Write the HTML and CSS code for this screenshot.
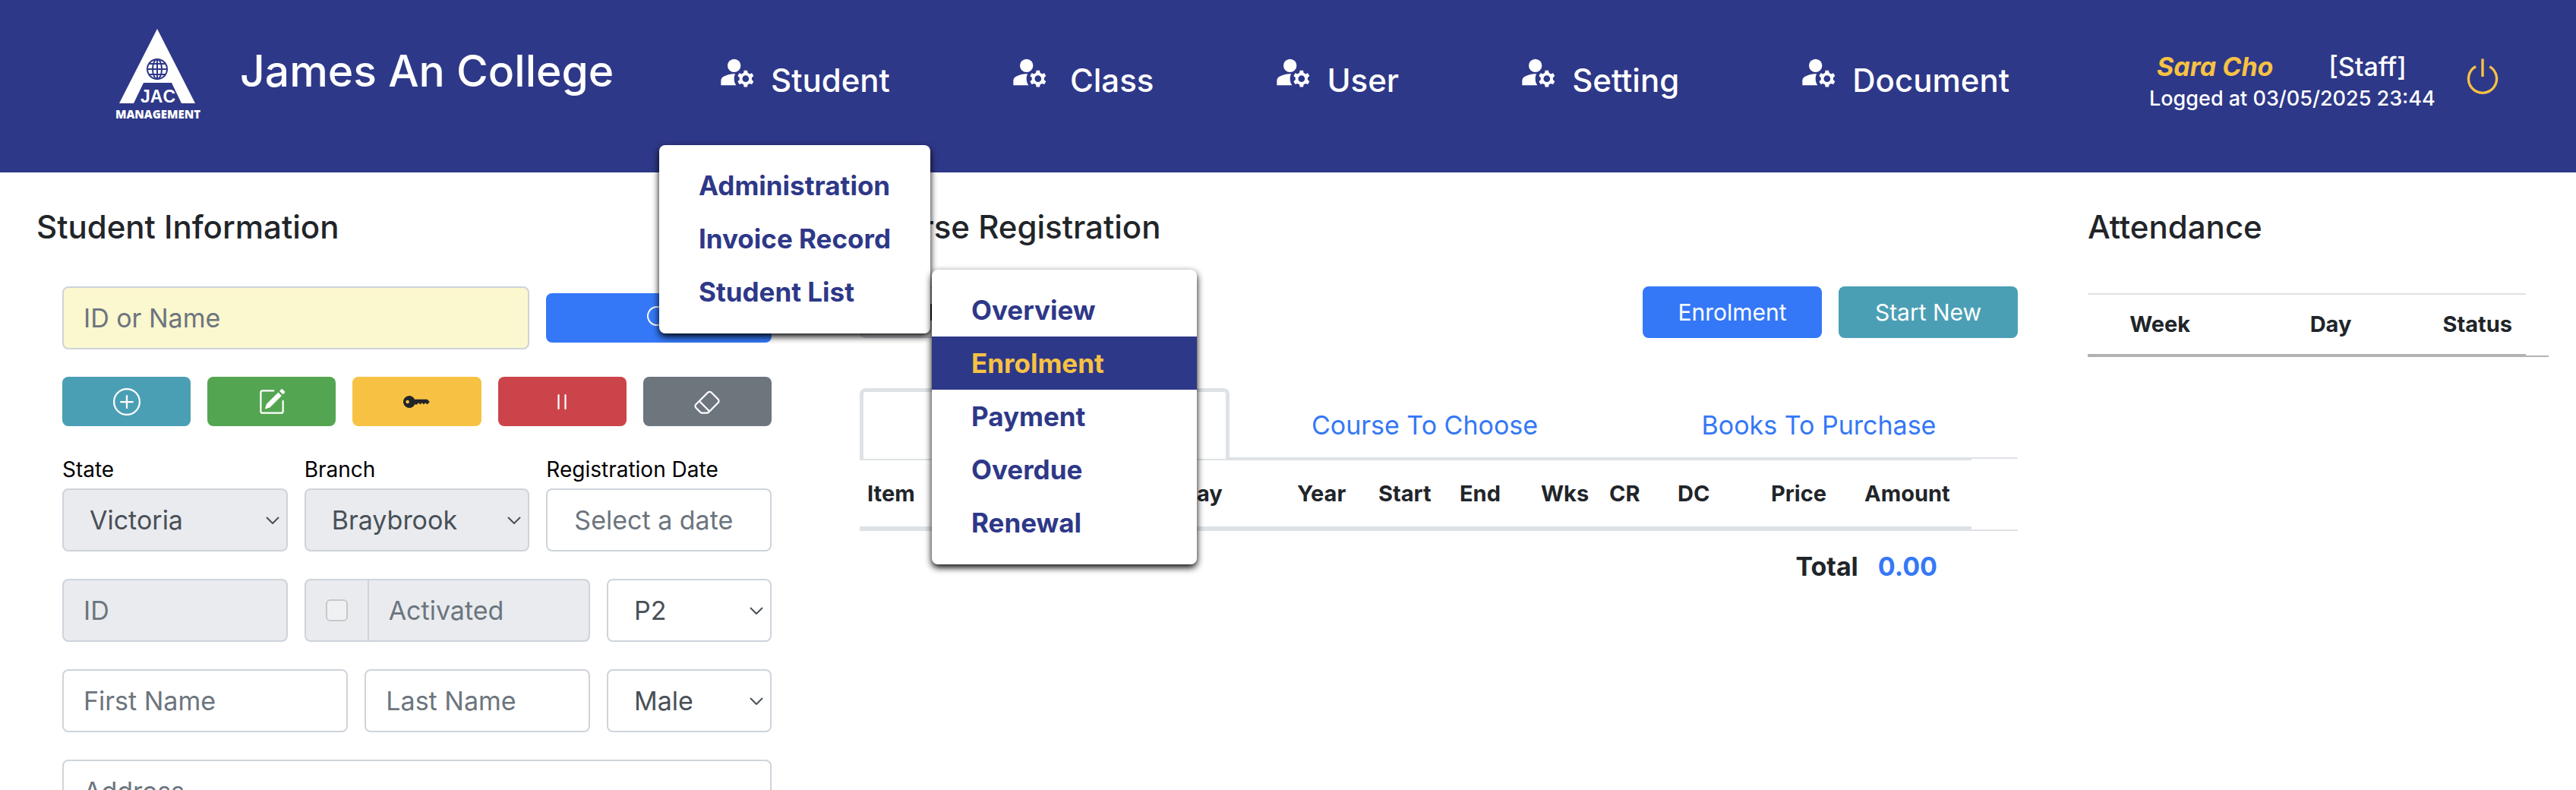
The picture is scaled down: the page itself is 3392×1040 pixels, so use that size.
FILE: index.html
```html
<!DOCTYPE html>
<html lang="en">
<head>
<meta charset="utf-8">
<title>James An College</title>
<link rel="stylesheet" href="styles.css">
</head>
<body>
<svg class="sprite" aria-hidden="true">
  <symbol id="user-gear" viewBox="0 0 24 24">
    <circle cx="10" cy="8" r="4"/>
    <path d="M10.67 13.02c-.22-.01-.44-.02-.67-.02-2.42 0-4.68.67-6.61 1.82-.88.52-1.39 1.5-1.39 2.53V20h9.26c-.79-1.13-1.26-2.51-1.26-4 0-1.07.25-2.07.67-2.98z"/>
    <path d="M20.75 16c0-.22-.03-.42-.06-.63l1.14-1.01-1-1.73-1.45.49c-.32-.27-.68-.48-1.08-.63L18 11h-2l-.3 1.49c-.4.15-.76.36-1.08.63l-1.45-.49-1 1.73 1.14 1.01c-.03.21-.06.41-.06.63s.03.42.06.63l-1.14 1.01 1 1.73 1.45-.49c.32.27.68.48 1.08.63L16 21h2l.3-1.49c.4-.15.76-.36 1.08-.63l1.45.49 1-1.73-1.14-1.01c.03-.21.06-.41.06-.63zM17 18c-1.1 0-2-.9-2-2s.9-2 2-2 2 .9 2 2-.9 2-2 2z"/>
  </symbol>
</svg>

<header class="header">
  <div class="brand">
    <svg class="logo" viewBox="0 0 128 128" role="img" aria-label="JAC Management">
      <path fill="#fff" d="M63 2 113 100H95L82 73H45L32 100H13z"/>
      <g fill="none" stroke="#2e3888" stroke-width="2">
        <circle cx="63" cy="55" r="13"/>
        <ellipse cx="63" cy="55" rx="6" ry="13"/>
        <path d="M63 42v26M50 55h26M52 48h22M52 62h22"/>
      </g>
      <text class="logo-jac" x="64" y="99">JAC</text>
      <text class="logo-sub" x="64" y="120">MANAGEMENT</text>
    </svg>
    <h1 class="brand-name">James An College</h1>
  </div>

  <nav class="nav">
    <div class="nav-item">
      <a class="nav-link" href="#student"><svg class="nav-icon"><use href="#user-gear"/></svg><span>Student</span></a>
      <ul class="menu">
        <li><a href="#administration">Administration</a></li>
        <li><a href="#invoice">Invoice Record</a></li>
        <li><a href="#list">Student List</a></li>
      </ul>
      <ul class="menu submenu">
        <li><a href="#overview">Overview</a></li>
        <li><a class="active" href="#enrolment">Enrolment</a></li>
        <li><a href="#payment">Payment</a></li>
        <li><a href="#overdue">Overdue</a></li>
        <li><a href="#renewal">Renewal</a></li>
      </ul>
    </div>
    <div class="nav-item"><a class="nav-link wide" href="#class"><svg class="nav-icon"><use href="#user-gear"/></svg><span>Class</span></a></div>
    <div class="nav-item"><a class="nav-link" href="#user"><svg class="nav-icon"><use href="#user-gear"/></svg><span>User</span></a></div>
    <div class="nav-item"><a class="nav-link" href="#setting"><svg class="nav-icon"><use href="#user-gear"/></svg><span>Setting</span></a></div>
    <div class="nav-item"><a class="nav-link" href="#document"><svg class="nav-icon"><use href="#user-gear"/></svg><span>Document</span></a></div>
  </nav>

  <div class="account">
    <div class="account-info">
      <div class="account-row"><em class="account-name">Sara Cho</em><span class="account-role">[Staff]</span></div>
      <div class="account-time">Logged at 03/05/2025 23:44</div>
    </div>
    <button class="power" type="button" aria-label="Log out">
      <svg viewBox="0 0 16 16"><path d="M7.5 1v7h1V1z"/><path d="M3 8.812a4.999 4.999 0 0 1 2.578-4.375l-.485-.874A6 6 0 1 0 11 3.616l-.501.865A5 5 0 1 1 3 8.812z"/></svg>
    </button>
  </div>
</header>

<main class="main">
  <section class="student">
    <h2>Student Information</h2>
    <form class="form">
      <div class="row search-row">
        <input class="control span-8 search" type="text" placeholder="ID or Name" aria-label="ID or Name">
        <button class="btn blue span-4" type="button" aria-label="Search">
          <svg class="icon-sm" viewBox="0 0 16 16"><path d="M11.742 10.344a6.5 6.5 0 1 0-1.397 1.398h-.001q.044.06.098.115l3.85 3.85a1 1 0 0 0 1.415-1.414l-3.85-3.85a1 1 0 0 0-.115-.1zM12 6.5a5.5 5.5 0 1 1-11 0 5.5 5.5 0 0 1 11 0"/></svg>
        </button>
      </div>
      <div class="actions">
        <button class="btn teal" type="button" aria-label="Add"><svg class="icon" viewBox="0 0 16 16"><circle cx="8" cy="8" r="7.5" fill="none" stroke="currentColor"/><path d="M8 4.5v7M4.500 8h7" fill="none" stroke="currentColor" stroke-linecap="round"/></svg></button>
        <button class="btn green" type="button" aria-label="Edit"><svg class="icon" viewBox="0 0 16 16"><path d="M15.502 1.94a.5.5 0 0 1 0 .706L14.459 3.69l-2-2L13.502.646a.5.5 0 0 1 .707 0l1.293 1.293zm-1.75 2.456-2-2L4.939 9.21a.5.5 0 0 0-.121.196l-.805 2.414a.25.25 0 0 0 .316.316l2.414-.805a.5.5 0 0 0 .196-.12l6.813-6.814z"/><path d="M1 13.5A1.5 1.5 0 0 0 2.5 15h11a1.5 1.5 0 0 0 1.5-1.5v-6a.5.5 0 0 0-1 0v6a.5.5 0 0 1-.5.5h-11a.5.5 0 0 1-.5-.5v-11a.5.5 0 0 1 .5-.5H9a.5.5 0 0 0 0-1H2.5A1.5 1.5 0 0 0 1 2.5z"/></svg></button>
        <button class="btn yellow" type="button" aria-label="Password"><svg class="icon" viewBox="0 0 16 16"><path d="M3.5 11.5a3.5 3.5 0 1 1 3.163-5H14L15.500 8 14 9.500l-1-1-1 1-1-1-1 1-1-1-1 1H6.663a3.500 3.500 0 0 1-3.163 2zM2.500 9a1 1 0 1 0 0-2 1 1 0 0 0 0 2z"/></svg></button>
        <button class="btn red" type="button" aria-label="Suspend"><svg class="icon" viewBox="0 0 16 16"><path d="M6 4v8M10 4v8" fill="none" stroke="currentColor" stroke-linecap="round"/></svg></button>
        <button class="btn grey" type="button" aria-label="Clear"><svg class="icon" viewBox="0 0 16 16"><path d="M8.086 2.207a2 2 0 0 1 2.828 0l3.879 3.879a2 2 0 0 1 0 2.828l-5.500 5.500A2 2 0 0 1 7.879 15H5.120a2 2 0 0 1-1.414-.586l-2.500-2.500a2 2 0 0 1 0-2.828l6.879-6.879zm2.121.707a1 1 0 0 0-1.414 0L4.160 7.547l5.293 5.293 4.633-4.633a1 1 0 0 0 0-1.414l-3.879-3.879zM8.746 13.547 3.453 8.254 1.914 9.793a1 1 0 0 0 0 1.414l2.500 2.500a1 1 0 0 0 .707.293H7.880a1 1 0 0 0 .707-.293l.160-.160z"/></svg></button>
      </div>
      <div class="row labelled">
        <div class="field span-4"><label for="state">State</label><select class="control" id="state" disabled><option>Victoria</option></select></div>
        <div class="field span-4"><label for="branch">Branch</label><select class="control" id="branch" disabled><option>Braybrook</option></select></div>
        <div class="field span-4"><label for="date">Registration Date</label><input class="control date" id="date" type="text" placeholder="Select a date"></div>
      </div>
      <div class="row">
        <input class="control span-4" type="text" placeholder="ID" aria-label="ID" disabled>
        <div class="group span-5">
          <span class="group-box"><input type="checkbox" id="active" disabled></span>
          <label class="group-text" for="active">Activated</label>
        </div>
        <select class="control span-3" aria-label="Grade"><option>P2</option></select>
      </div>
      <div class="row">
        <input class="control span-5" type="text" placeholder="First Name" aria-label="First Name">
        <input class="control span-4" type="text" placeholder="Last Name" aria-label="Last Name">
        <select class="control span-3" aria-label="Gender"><option>Male</option></select>
      </div>
      <div class="row">
        <input class="control span-12" type="text" placeholder="Address" aria-label="Address">
      </div>
    </form>
  </section>

  <section class="course">
    <h2>Course Registration</h2>
    <div class="toolbar">
      <select class="grade" aria-label="Grade"><option>P2</option></select>
      <div class="toolbar-buttons">
        <button class="btn blue" type="button">Enrolment</button>
        <button class="btn teal" type="button">Start New</button>
      </div>
    </div>
    <div class="tabs">
      <a class="tab selected" href="#registered" aria-label="Registered"></a>
      <a class="tab" href="#courses">Course To Choose</a>
      <a class="tab" href="#books">Books To Purchase</a>
    </div>
    <div class="course-list">
      <table>
        <thead><tr><th class="c-item">Item</th><th class="c-name"></th><th class="c-day">Day</th><th class="c-date">Year</th><th class="c-date">Start</th><th class="c-date">End</th><th class="c-num">Wks</th><th class="c-num">CR</th><th class="c-sum">DC</th><th class="c-sum">Price</th><th>Amount</th></tr></thead>
      </table>
    </div>
    <div class="total"><span>Total</span><span class="total-value">0.00</span></div>
  </section>

  <section class="attendance">
    <h2>Attendance</h2>
    <div class="attendance-list">
      <table>
        <thead><tr><th class="a-week">Week</th><th class="a-day">Day</th><th>Status</th></tr></thead>
      </table>
    </div>
  </section>
</main>
</body>
</html>
```
FILE: styles.css
```css
* { box-sizing: border-box; }

body {
  margin: 0;
  height: 100vh;
  overflow: hidden;
  background: #fff;
  color: #212529;
  font-family: Inter, "Liberation Sans", sans-serif;
  font-size: 34px;
}

a { text-decoration: none; }
button, input, select { font: inherit; margin: 0; }
.sprite { display: none; }
svg { fill: currentColor; flex: none; display: block; }

/* Header */
.header {
  display: grid;
  grid-template-columns: 945fr 1701fr 746fr;
  height: 227px;
  background: #2e3888;
  color: #fff;
}
.brand { display: flex; align-items: flex-start; padding: 36px 0 0 144px; }
.logo { width: 128px; height: 128px; }
.logo-jac { font: bold 23px "Liberation Sans", sans-serif; fill: #fff; text-anchor: middle; }
.logo-sub { font: 800 15px "Open Sans", sans-serif; fill: #fff; text-anchor: middle; }
.brand-name {
  margin: 22px 0 0 44px;
  font-size: 57px;
  line-height: 72px;
  font-weight: 500;
  white-space: nowrap;
}
.nav { display: flex; justify-content: space-between; align-items: flex-start; padding-top: 69px; }
.nav-item { position: relative; }
.nav-link { display: flex; gap: 18px; color: #fff; font-size: 42px; line-height: 54px; font-weight: 500; }
.nav-link.wide { gap: 27px; }
.nav-link span { padding-top: 10px; }
.nav-icon { width: 52px; height: 52px; }

.menu {
  position: absolute;
  z-index: 1;
  top: 122px;
  left: -77px;
  width: 357px;
  margin: 0;
  padding: 18px 0 20px;
  list-style: none;
  background: #fff;
  border-radius: 8px;
  box-shadow: 0 4px 10px #000;
}
.menu a {
  display: block;
  padding-left: 52px;
  color: #2e3888;
  font-size: 35px;
  line-height: 70px;
  font-weight: 700;
}
.menu a.active { background: #2e3888; color: #f7c244; }
.submenu { top: 286px; left: 282px; width: 349px; }

.account { display: flex; align-items: flex-start; padding: 66px 0 0 184px; white-space: nowrap; }
.account-row { display: flex; justify-content: space-between; padding: 0 38px 0 10px; font-size: 34px; line-height: 44px; font-weight: 500; }
.account-name { color: #f7c244; font-weight: 700; }
.account-time { margin-top: 3px; font-size: 27px; line-height: 34px; font-weight: 500; }
.power { margin: 8px 0 0 35px; padding: 0; border: 0; background: none; color: #f7c244; }
.power svg { width: 54px; height: 54px; }

/* Page columns */
.main {
  display: grid;
  grid-template-columns: 992fr 1525fr 607fr;
  column-gap: 92px;
  padding: 45px 36px 0 48px;
}
.main > section { min-width: 0; }
h2 { margin: 0; font-size: 42px; line-height: 54px; font-weight: 500; }

/* Student form */
.form { display: flex; flex-direction: column; gap: 36px; padding: 51px 24px 0 34px; }
.row { display: grid; grid-template-columns: repeat(12, 1fr); gap: 22px; }
.search-row { align-items: center; }
.labelled { margin-top: 4px; }
.span-3 { grid-column: span 3; }
.span-4 { grid-column: span 4; }
.span-5 { grid-column: span 5; }
.span-8 { grid-column: span 8; }
.span-12 { grid-column: span 12; }

.control {
  width: 100%;
  min-width: 0;
  height: 83px;
  padding: 0 26px;
  border: 2px solid #ced4da;
  border-radius: 8px;
  background: #fff;
  color: #495057;
}
.control::placeholder { color: #6c757d; opacity: 1; }
.control:disabled { background-color: #e9ebef; opacity: 1; }
.search { background: #fbf7cf; }
.date { padding-left: 35px; }
select.control {
  appearance: none;
  padding-left: 34px;
  background-image: url("data:image/svg+xml,%3Csvg xmlns='http://www.w3.org/2000/svg' viewBox='0 0 18 10'%3E%3Cpath d='M1 1l8 8 8-8' fill='none' stroke='%23495057' stroke-width='2'/%3E%3C/svg%3E");
  background-repeat: no-repeat;
  background-position: right 9px center;
  background-size: 18px 10px;
}
.field label { display: block; margin-bottom: 8px; color: #000; font-size: 28px; line-height: 34px; }

.btn {
  display: flex;
  align-items: center;
  justify-content: center;
  height: 65px;
  padding: 0;
  border: 0;
  border-radius: 8px;
  color: #fff;
}
.blue { background: #3478f7; }
.teal { background: #4b9fb5; }
.green { background: #54a551; }
.yellow { background: #f7c244; color: #212529; }
.red { background: #cb444a; }
.grey { background: #6d757d; }
.icon { width: 36px; height: 36px; }
.icon-sm { width: 32px; height: 32px; }
.actions { display: grid; grid-template-columns: repeat(5, 1fr); gap: 22px; }

.group { display: flex; height: 83px; border: 2px solid #ced4da; border-radius: 8px; background: #e9ebef; }
.group-box { display: flex; align-items: center; padding: 0 26px; border-right: 2px solid #ced4da; }
.group-box input {
  appearance: none;
  width: 29px;
  height: 29px;
  border: 2px solid #c6c8ca;
  border-radius: 6px;
  background: #f0f1f3;
}
.group-text { padding-left: 26px; line-height: 79px; color: #6c757d; }

/* Course registration */
.toolbar { display: flex; justify-content: space-between; margin-top: 51px; }
.grade {
  appearance: none;
  width: 320px;
  height: 68px;
  padding-left: 88px;
  border: 2px solid #ced4da;
  border-radius: 8px;
  background: #e9ebef;
  color: #212529;
  font-size: 30px;
}
.toolbar-buttons { display: flex; gap: 22px; }
.toolbar .btn { width: 236px; height: 68px; font-size: 30px; }

.tabs { display: grid; grid-template-columns: 487fr 514fr 524fr; height: 93px; margin-top: 66px; border-bottom: 2px solid #dee2e6; }
.tab { padding-top: 28px; color: #3478f7; line-height: 42px; text-align: center; }
.tab.selected {
  margin-bottom: -2px;
  border: 5px solid #dee2e6;
  border-bottom: 0;
  border-radius: 8px 8px 0 0;
  background: #fff;
}

table { border-spacing: 0; table-layout: fixed; }
th { padding: 0; font-size: 29px; line-height: 36px; font-weight: 700; }
.course-list { border-bottom: 2px solid #dee2e6; }
.course-list table { width: 96%; }
.course-list th { height: 93px; padding: 0 0 0 10px; border-top: 2px solid #dee2e6; border-bottom: 4px solid #dee2e6; text-align: left; }
.c-item { width: 5.67%; }
.c-name { width: 22.54%; }
.c-day { width: 10.45%; }
.c-date { width: 7.31%; }
.c-num { width: 6.15%; }
.c-sum { width: 8.4%; }

.total { display: flex; justify-content: flex-end; gap: 26px; margin-top: 25px; padding-right: 106px; font-size: 34px; line-height: 44px; font-weight: 700; }
.total-value { color: #3478f7; }

/* Attendance */
.attendance-list { margin-top: 60px; border-bottom: 2px solid #b2b2b2; }
.attendance-list table { width: 95%; }
.attendance-list th { height: 82px; border-top: 2px solid #dee2e6; border-bottom: 2px solid #b2b2b2; }
.a-week { width: 33%; }
.a-day { width: 45%; }
```
